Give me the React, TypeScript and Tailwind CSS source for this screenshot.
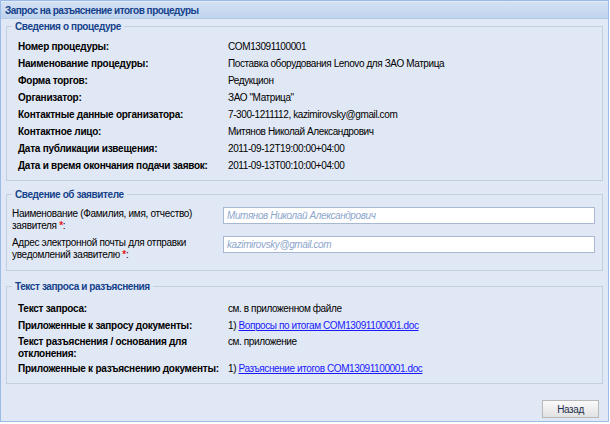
import React from 'react';

const procedure = [
  ['Номер процедуры:', 'COM13091100001'],
  ['Наименование процедуры:', 'Поставка оборудования Lenovo для ЗАО Матрица'],
  ['Форма торгов:', 'Редукцион'],
  ['Организатор:', 'ЗАО "Матрица"'],
  ['Контактные данные организатора:', '7-300-1211112, kazimirovsky@gmail.com'],
  ['Контактное лицо:', 'Митянов Николай Александрович'],
  ['Дата публикации извещения:', '2011-09-12T19:00:00+04:00'],
  ['Дата и время окончания подачи заявок:', '2011-09-13T00:10:00+04:00'],
];

function Legend({ children }: { children: React.ReactNode }) {
  return (
    <legend className="ml-[5px] px-[3px] text-[10px] leading-[13px] font-bold tracking-[-0.4px] text-[#15428b]">
      {children}
    </legend>
  );
}

export default function App() {
  return (
    <div className="w-[610px] h-[424px] bg-white font-['Liberation_Sans',sans-serif] text-[10px] tracking-[-0.4px] text-black">
      <div className="h-[422px] w-[609px] border border-[#99bbe8] bg-[#e0e8f5] flex flex-col">
        <div className="h-[17px] mt-[1px] bg-gradient-to-b from-[#d3e1f3] to-[#c0d3ee] border-b border-[#b4cbe8] flex items-center pl-[4px]">
          <span className="text-[#15428b] text-[10px] font-bold tracking-[-0.5px]">Запрос на разъяснение итогов процедуры</span>
        </div>

        <div className="flex-1 px-[5px] pt-[1px] flex flex-col">
          <fieldset className="border border-[#c3cfe0] pb-[6px]">
            <Legend>Сведения о процедуре</Legend>
            <div className="pt-[5px] pl-[11px]">
              {procedure.map(([label, value]) => (
                <div key={label} className="flex h-[17px] items-center">
                  <div className="w-[210px] font-bold tracking-[-0.25px] whitespace-nowrap">{label}</div>
                  <div>{value}</div>
                </div>
              ))}
            </div>
          </fieldset>

          <fieldset className="mt-[7px] border border-[#c3cfe0] pb-[9px]">
            <Legend>Сведение об заявителе</Legend>
            <div className="pt-[6px] pl-[5px] flex flex-col gap-[4px]">
              <div className="flex items-start">
                <div className="w-[211px] leading-[12px] pt-[1px] tracking-[-0.3px]">
                  Наименование (Фамилия, имя, отчество)<br />
                  заявителя <span className="text-[#e02020] font-bold">*</span>:
                </div>
                <div className="w-[372px] h-[17px] bg-white border border-[#a8b8d0] flex items-center px-[3px] italic text-[#8da6cc]">
                  Митянов Николай Александрович
                </div>
              </div>
              <div className="flex items-start">
                <div className="w-[211px] leading-[12px] pt-[1px] tracking-[-0.3px]">
                  Адрес электронной почты для отправки<br />
                  уведомлений заявителю <span className="text-[#e02020] font-bold">*</span>:
                </div>
                <div className="w-[372px] h-[17px] bg-white border border-[#a8b8d0] flex items-center px-[3px] italic text-[#8da6cc]">
                  kazimirovsky@gmail.com
                </div>
              </div>
            </div>
          </fieldset>

          <fieldset className="mt-[9px] border border-[#c3cfe0] pb-[6px]">
            <Legend>Текст запроса и разъяснения</Legend>
            <div className="pt-[7px] pl-[11px]">
              <div className="flex h-[17px] items-center">
                <div className="w-[210px] font-bold tracking-[-0.25px]">Текст запроса:</div>
                <div>см. в приложенном файле</div>
              </div>
              <div className="flex h-[17px] items-center">
                <div className="w-[210px] font-bold tracking-[-0.25px]">Приложенные к запросу документы:</div>
                <div>1) <a className="text-[#1a1aff] underline">Вопросы по итогам COM13091100001.doc</a></div>
              </div>
              <div className="flex items-start pt-[2px]">
                <div className="w-[210px] font-bold tracking-[-0.25px] leading-[12px]">Текст разъяснения / основания для<br />отклонения:</div>
                <div className="leading-[12px]">см. приложение</div>
              </div>
              <div className="flex h-[17px] items-center">
                <div className="w-[210px] font-bold tracking-[-0.25px] whitespace-nowrap">Приложенные к разъяснению документы:</div>
                <div>1) <a className="text-[#1a1aff] underline">Разъяснение итогов COM13091100001.doc</a></div>
              </div>
            </div>
          </fieldset>

          <div className="flex justify-end mt-[16px] pr-[4px]">
            <button className="w-[57px] h-[18px] border border-[#b8b8b8] bg-gradient-to-b from-[#fafafa] to-[#e2e2e2] text-[10px] text-[#1f2f4f]">
              Назад
            </button>
          </div>
        </div>
      </div>
    </div>
  );
}
